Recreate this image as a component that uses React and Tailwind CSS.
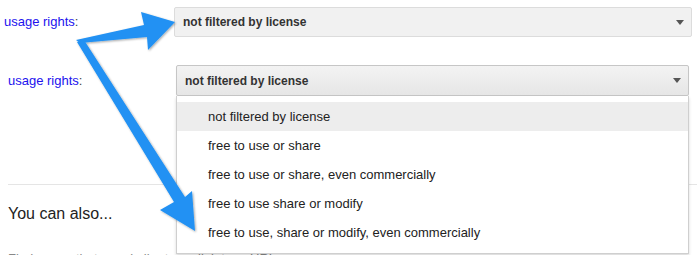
import React from "react";

function Caret() {
  return (
    <svg width="8" height="5" viewBox="0 0 8 5" className="shrink-0">
      <polygon points="0,0 8,0 4,5" fill="#555" />
    </svg>
  );
}

const items = [
  "not filtered by license",
  "free to use or share",
  "free to use or share, even commercially",
  "free to use share or modify",
  "free to use, share or modify, even commercially",
];

export default function App() {
  return (
    <div
      className="relative w-[697px] h-[255px] overflow-hidden bg-white"
      style={{ fontFamily: '"Liberation Sans", Arial, sans-serif' }}
    >
      {/* Row 1 */}
      <div className="flex items-center pt-[7px]">
        <div className="w-[174px] pl-1 text-[13px] text-[#2211ee]">
          usage rights<span className="text-[#444]">:</span>
        </div>
        <div className="w-[518px] h-[30px] flex items-center justify-between pl-2 pr-[7px] border border-[#dcdcdc] bg-[#f1f1f1] rounded-[2px]">
          <span className="text-[12px] font-bold text-[#333]">not filtered by license</span>
          <Caret />
        </div>
      </div>

      {/* Row 2 */}
      <div className="flex items-center mt-[28px]">
        <div className="w-[176px] pl-2 text-[13px] text-[#2211ee]">
          usage rights<span className="text-[#444]">:</span>
        </div>
        <div className="relative w-[513px]">
          <div className="h-[31px] flex items-center justify-between pl-2 pr-[7px] border border-[#c6c6c6] bg-gradient-to-b from-[#f3f3f3] to-[#e6e6e6] rounded-[2px] shadow-[0_1px_1px_rgba(0,0,0,0.08)]">
            <span className="text-[12px] font-bold text-[#333]">not filtered by license</span>
            <Caret />
          </div>
          <div className="absolute left-0 top-full z-10 w-[513px] bg-white border border-t-0 border-[#cfcfcf] py-[6px] shadow-[0_2px_3px_rgba(0,0,0,0.15)]">
            {items.map((t, i) => (
              <div
                key={t}
                className={
                  "h-[29px] flex items-center pl-[31px] text-[13px] text-[#222] " +
                  (i === 0 ? "bg-[#ededed]" : "")
                }
              >
                {t}
              </div>
            ))}
          </div>
        </div>
      </div>

      <div className="ml-2 mt-[88px] border-t border-[#e5e5e5]" />
      <div className="pl-2 mt-[20px] text-[16px] leading-[18px] text-[#222]">You can also...</div>
      <div className="pl-2 mt-[28px] text-[13px] leading-[15px] text-[#888]">
        Find pages that are similar to, or link to, a URL
      </div>

      {/* Annotation arrows */}
      <svg
        className="absolute left-0 top-0 z-20 pointer-events-none"
        width="697"
        height="255"
        viewBox="0 0 697 255"
      >
        <defs>
          <filter id="sh" x="-20%" y="-20%" width="140%" height="140%">
            <feDropShadow dx="1" dy="1" stdDeviation="0.8" floodColor="#000" floodOpacity="0.35" />
          </filter>
        </defs>
        <g fill="#2191f3" filter="url(#sh)">
          <polygon points="76,40 144,25 141,12 175,22 148,50 147,37 80,43" />
          <polygon points="77,42 174,202 160,210 195,231 192,191 185,197 84,40" />
        </g>
      </svg>
    </div>
  );
}
